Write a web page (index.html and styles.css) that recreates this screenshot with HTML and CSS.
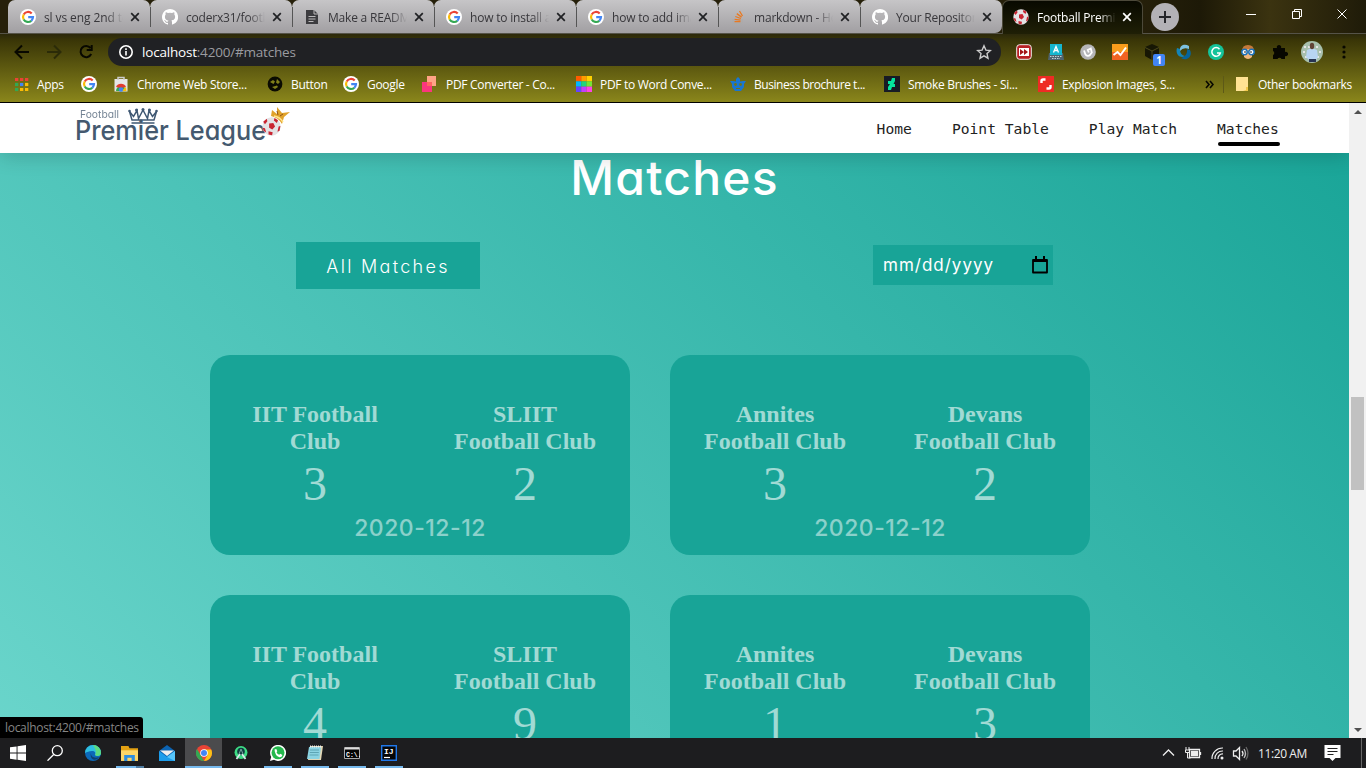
FILE: index.html
```html
<!DOCTYPE html>
<html lang="en">
<head>
<meta charset="utf-8">
<title>Football Premier League</title>
<link rel="stylesheet" href="styles.css">
</head>
<body>
<svg class="defs">
  <symbol id="google" viewBox="0 0 16 16"><circle cx="8" cy="8" r="8" fill="#fff"/><g fill="none" stroke-width="2.2"><path d="M11.7 4.5A5 5 0 0 0 3.7 5.5" stroke="#ea4335"/><path d="M3.7 5.5A5 5 0 0 0 3.7 10.5" stroke="#fbbc05"/><path d="M3.7 10.5A5 5 0 0 0 11.3 11.8" stroke="#34a853"/><path d="M11.3 11.8A5 5 0 0 0 13 8.1H8.2" stroke="#4285f4"/></g></symbol>
  <symbol id="github" viewBox="0 0 16 16"><path fill="#fff" d="M8 0C3.6 0 0 3.6 0 8c0 3.5 2.300 6.500 5.500 7.600.4.1.5-.2.5-.4v-1.400c-2.200.5-2.700-1-2.700-1-.4-.9-.9-1.200-.9-1.200-.7-.5.1-.5.1-.5.8.1 1.200.8 1.200.8.7 1.300 1.900.9 2.300.7.1-.5.3-.9.5-1.100-1.800-.2-3.600-.9-3.600-4 0-.9.3-1.600.8-2.100-.1-.2-.4-1 .1-2.100 0 0 .7-.2 2.200.8a7.600 7.600 0 0 1 4 0c1.500-1 2.200-.8 2.200-.8.4 1.100.2 1.900.1 2.100.5.6.8 1.300.8 2.100 0 3.100-1.900 3.700-3.700 3.900.3.400.6.9.6 1.700v2.100c0 .2.1.5.6.4A8 8 0 0 0 8 0"/></symbol>
  <symbol id="ball" viewBox="0 0 16 16"><circle cx="8" cy="8" r="7.700" fill="#e4e2e4"/><path fill="#c92531" d="M6 5.500l3.500-.5 1.500 3-2.300 2.500L6 9zM1 4l3-2.500.5 2L2.500 6zM10.500.8l3 2L12.500 5 10 3zM14 8l1.500-.5-.7 4-1.800 1zM5.500 12l3.500.8-.5 2.600-3-.7zM.5 9L2.500 9.500 3.500 13 1.500 11.800z"/></symbol>
  <symbol id="x" viewBox="0 0 10 10"><path d="M1.200 1.200l7.600 7.600M8.800 1.200L1.200 8.800" stroke="currentColor" stroke-width="1.700"/></symbol>
</svg>

<div class="browser">
  <div class="tabs">
    <div class="tab"><svg class="fav"><use href="#google"/></svg><span class="label t1">sl vs eng 2nd test</span><svg class="close"><use href="#x"/></svg></div>
    <div class="tab"><svg class="fav"><use href="#github"/></svg><span class="label">coderx31/football</span><svg class="close"><use href="#x"/></svg></div>
    <div class="tab"><svg class="fav" viewBox="0 0 16 16"><path fill="#3c3c3f" d="M2 1h8l4 4v10H2z"/><path d="M10 1v4h4M4.500 7.500h7M4.500 10h7M4.500 12.500h5" stroke="#bbb9bb" fill="none"/></svg><span class="label">Make a README</span><svg class="close"><use href="#x"/></svg></div>
    <div class="tab"><svg class="fav"><use href="#google"/></svg><span class="label">how to install angular</span><svg class="close"><use href="#x"/></svg></div>
    <div class="tab"><svg class="fav"><use href="#google"/></svg><span class="label">how to add image</span><svg class="close"><use href="#x"/></svg></div>
    <div class="tab"><svg class="fav" viewBox="0 0 16 16"><path d="M3 10v4.500h9V10" stroke="#aaa" fill="none"/><path d="M4.500 12.700h6M4.600 10.300l6 .9M5.300 7.500l5.600 2M6.800 4.600l4.800 3.500M9.500 2l3 5" stroke="#e87922" stroke-width="1.300"/></svg><span class="label">markdown - How to</span><svg class="close"><use href="#x"/></svg></div>
    <div class="tab last"><svg class="fav"><use href="#github"/></svg><span class="label">Your Repositories</span><svg class="close"><use href="#x"/></svg></div>
    <div class="tab active"><svg class="fav"><use href="#ball"/></svg><span class="label">Football Premier</span><svg class="close"><use href="#x"/></svg></div>
    <div class="newtab"><svg width="12" height="12"><path d="M6 0v12M0 6h12" stroke="#25252a" stroke-width="2"/></svg></div>
    <svg class="winctl" width="120" height="24" fill="none" stroke="#fff"><path d="M8 12.500h10M54.500 9.500h7v7h-7zM56.500 9v-1.500h7v7H62M99.500 7.500l9 9M108.500 7.500l-9 9"/></svg>
  </div>

  <div class="toolbar">
    <svg class="navbtns" width="108" height="28" fill="none" stroke-width="2"><path d="M29 14H16M22 7.500L15.500 14l6.500 6.500" stroke="#080800"/><path d="M47 14h13M54 7.500l6.500 6.500-6.500 6.500" stroke="#2b2b08"/><path d="M90.500 10A5.600 5.600 0 1 0 91.200 16M91.700 7v5h-5" stroke="#080800"/></svg>
    <div class="omnibox">
      <svg width="16" height="16" fill="none" stroke="#fff" stroke-width="1.600"><circle cx="8" cy="8" r="6.200"/><path d="M8 7v4.500M8 4.300v1.600"/></svg>
      <span class="url"><b>localhost</b>:4200/#matches</span>
      <svg class="star" width="16" height="16" viewBox="0 0 16 16" fill="none" stroke="#ccc" stroke-width="1.400"><path d="M8 1.800l1.900 4.300 4.600.4L11 9.600l1 4.600-4-2.400-4 2.400 1-4.600-3.500-3.100 4.600-.4z"/></svg>
    </div>
    <div class="exts">
      <svg viewBox="0 0 16 16"><rect x=".7" y=".7" width="14.600" height="14.600" rx="3" fill="#b81f24" stroke="#eee"/><rect x="3" y="4" width="10" height="8" fill="#fff"/><path d="M4 5l4 3-4 3zM8 5l4 3-4 3z" fill="#a31418"/></svg>
      <svg viewBox="0 0 16 16"><path d="M1 9h14l1 7H0z" fill="#4f6470"/><path d="M2 0h12v11H2z" fill="#15b6cf"/><path d="M5.500 8.500L8 2.500l2.500 6M6.300 6.500h3.500" stroke="#fff" fill="none" stroke-width="1.300"/><path d="M2 12.500h12M4 14.500h8" stroke="#c4d0d5" stroke-dasharray="1.500 1"/></svg>
      <svg viewBox="0 0 16 16"><circle cx="8" cy="8" r="7.800" fill="#b5b5b8"/><path d="M4 6.500l1.500 4a3 3 0 0 0 4.500.5l1.800-2.500-1-4-3 1.500 1 2.500" fill="none" stroke="#fff" stroke-width="1.800"/></svg>
      <svg viewBox="0 0 16 16"><path fill="#f99d1c" d="M0 0h16v8H0z"/><path fill="#f26322" d="M0 8h16v8H0z"/><path d="M1.500 11l4-3 3 3L14 3.500" fill="none" stroke="#fff" stroke-width="2"/></svg>
      <div class="cube"><svg viewBox="0 0 16 16"><path fill="#171704" d="M8 0l7 3v9l-7 4-7-4V3z"/><path d="M1 3.500l7 3.500 7-3.500M8 7v9" stroke="#5a5520" fill="none" stroke-width=".8"/></svg><span>1</span></div>
      <svg viewBox="0 0 16 16"><path d="M13 2C8-1 3 2 4 7q3-4 9-2z" fill="#7dc1df"/><path d="M1 4c-2 6 3 11 8 8q-5-1-5-7z" fill="#1485b8"/><path d="M5 14c6 4 12-2 9-8L11 5q1 7-6 9" fill="#07649c"/></svg>
      <svg viewBox="0 0 16 16"><circle cx="8" cy="8" r="8" fill="#15c39a"/><path d="M11.500 5.200A4.300 4.300 0 1 0 12.300 9H9" fill="none" stroke="#fff" stroke-width="1.500"/></svg>
      <svg viewBox="0 0 16 16"><path fill="#c4793a" d="M2 7q0-6 6-6t6 6v4H2z"/><path fill="#f1b77d" d="M4 5h8v8q-4 4-8 0z"/><g fill="#fff" stroke="#1771bd" stroke-width="1.500"><circle cx="4.500" cy="8" r="2.700"/><circle cx="11.500" cy="8" r="2.700"/></g><circle cx="5" cy="8" r=".8"/><circle cx="11" cy="8" r=".8"/></svg>
      <svg viewBox="0 0 16 16"><path fill="#070700" d="M1 4h4a2.200 2.200 0 1 1 4 0h4v4a2.200 2.200 0 1 1 0 4v3H9.500a2.200 2.200 0 0 0-4 0H1v-4a2.200 2.200 0 0 0 0-4z"/></svg>
      <svg class="avatar" viewBox="0 0 22 22"><circle cx="11" cy="11" r="11" fill="#a7bfac"/><path d="M3 6h16M2 11h18M4 16h14" stroke="#e4e4e4" stroke-dasharray="2 2" stroke-width="2"/><path fill="#b8d5f4" d="M6 9l5-2 5 2 1 7-2 3H8l-3-3z"/><ellipse cx="11" cy="5" rx="2.200" ry="3.200" fill="#604336"/><path fill="#273352" d="M8 18h7v3H8z"/></svg>
      <svg class="dots" viewBox="0 0 4 16" fill="#080800"><circle cx="2" cy="3" r="1.600"/><circle cx="2" cy="8" r="1.600"/><circle cx="2" cy="13" r="1.600"/></svg>
    </div>
  </div>

  <div class="bookmarks">
    <div class="bm b1"><svg viewBox="0 0 16 16" stroke-width="3.200" stroke-dasharray="3.300 1.700"><path d="M2 3.500h14" stroke="#ea4335"/><path d="M2 8.500h5" stroke="#34a853"/><path d="M7 8.500h5" stroke="#4285f4"/><path d="M12 8.500h4" stroke="#fbbc05"/><path d="M2 13.500h5" stroke="#34a853"/><path d="M7 13.500h9" stroke="#fbbc05"/></svg><span>Apps</span></div>
    <div class="bm b2"><svg><use href="#google"/></svg></div>
    <div class="bm b3"><svg viewBox="0 0 16 16"><path d="M1.500 3h13v12.500h-13z" fill="#e6e6e6"/><path d="M5 4V1.500h6V4" fill="none" stroke="#ccc" stroke-width="1.500"/><path d="M3 15a5 5 0 0 1 10 0z" fill="#34a853"/><path d="M3 11a5.500 5.500 0 0 1 10 0l-5 1z" fill="#e33b2e"/><path d="M8 15l5-4 .5 4z" fill="#fbbc05"/><circle cx="8" cy="13.500" r="2.200" fill="#4285f4"/></svg><span>Chrome Web Store...</span></div>
    <div class="bm b4"><svg viewBox="0 0 16 16"><circle cx="8" cy="8" r="7.400" fill="#0b0b02"/><path d="M3 6l3-2 2 1.500L6.500 8zM10 3l3 3-2 2-2-1.500zM5 11l5-1.500 1 1.500-3 2z" fill="#81801a"/></svg><span>Button</span></div>
    <div class="bm b5"><svg><use href="#google"/></svg><span>Google</span></div>
    <div class="bm b6"><svg viewBox="0 0 16 16"><path d="M5 0h9v10H5z" fill="#ffa386"/><path d="M0 6h10v10H0z" fill="#fb367d"/><path d="M5 6h5v4H5z" fill="#ff655f"/></svg><span>PDF Converter - Co...</span></div>
    <div class="bm b7"><svg viewBox="0 0 16 16" stroke-width="5.400"><path d="M0 2.700h5.300" stroke="#ff5b00"/><path d="M5.300 2.700h5.300" stroke="#ff9c00"/><path d="M10.600 2.700H16" stroke="#ffd000"/><path d="M0 8h5.300" stroke="#00b7ff"/><path d="M5.300 8h5.300" stroke="#20d77b"/><path d="M10.600 8H16" stroke="#73e735"/><path d="M0 13.300h5.300" stroke="#6543ff"/><path d="M5.300 13.300h5.300" stroke="#c33eff"/><path d="M10.600 13.300H16" stroke="#ff42e6"/></svg><span>PDF to Word Conve...</span></div>
    <div class="bm b8"><svg viewBox="0 0 16 16"><path fill="#1976d2" d="M3 5l3 .5V3l2-2 2 2v2.500l3-.5 3 0-2 3v3l-3 4H5l-3-4V8L0 5z"/><g fill="#72751a"><circle cx="5.500" cy="8.500" r="1.400"/><circle cx="10.500" cy="8.500" r="1.400"/></g><path d="M6 12.500h4" stroke="#72751a"/></svg><span>Business brochure t...</span></div>
    <div class="bm b9"><svg viewBox="0 0 16 16"><path fill="#171b25" d="M0 0h16v16H0z"/><path fill="#05e59d" d="M8 2h3v3L9.500 8H11v3H8l-1 3H4v-3l2-3H4V5h3z"/></svg><span>Smoke Brushes - Si...</span></div>
    <div class="bm b10"><svg viewBox="0 0 16 16"><path fill="#ee2b24" d="M0 0h16v16H0z"/><path d="M3.500 7V5q0-1.500 1.500-1.500h2.500M12.500 9v2q0 1.500-1.500 1.500H8.500" fill="none" stroke="#fff" stroke-width="2.400"/></svg><span>Explosion Images, S...</span></div>
    <svg class="more" width="9" height="9" fill="none" stroke="#080800" stroke-width="1.600"><path d="M1 1l3 3.500L1 8M5 1l3 3.500L5 8"/></svg>
    <div class="bm other"><svg viewBox="0 0 16 16"><path fill="#ffe394" d="M2 1h12v11l-2 3H2z"/><path fill="#f1c84b" d="M12 11h2v4H9l3-1z"/></svg><span>Other bookmarks</span></div>
  </div>
</div>

<div class="view">
  <main class="page">
    <nav class="site-nav">
      <svg class="logo" width="220" height="44">
        <text class="logo-small" x="5" y="13" textLength="39" lengthAdjust="spacingAndGlyphs">Football</text>
        <text class="logo-big" x="0" y="35" textLength="191" lengthAdjust="spacingAndGlyphs">Premier League</text>
        <path d="M54.500 6.500L57 15h22l2.500-8.500M54.500 6.500l4 5 3.500-6 1.500 8 4.500-8.500 4.500 8.500 1.500-8 3.500 6 4-5M56.500 18h23" fill="none" stroke="#3f5873" stroke-width="1.500"/>
        <g fill="#3f5873"><circle cx="54.500" cy="6" r="1.300"/><circle cx="61.500" cy="5" r="1.500"/><circle cx="68" cy="4.500" r="1.500"/><circle cx="74.500" cy="5" r="1.500"/><circle cx="81.500" cy="6" r="1.300"/></g>
        <svg x="187" y="11" width="19" height="21"><use href="#ball"/></svg>
        <path d="M196 11l1-6 5 4 0-7 5 6 8-1-6 5-2 7q-3-6-11-8z" fill="#e0a22a"/><path d="M199 11q6 1 9 6" fill="none" stroke="#ffe289" stroke-width="1.500"/><path d="M202 6l1 4M208 9l-3 2" stroke="#8d5316"/>
      </svg>
      <ul class="links"><li>Home</li><li>Point Table</li><li>Play Match</li><li class="current">Matches</li></ul>
    </nav>
    <section class="matches">
      <h1>Matches</h1>
      <div class="filters">
        <button class="all">All Matches</button>
        <div class="date"><span>mm/dd/yyyy</span><svg width="16" height="18"><path d="M1 4h14v12.500H1z" fill="none" stroke="#000" stroke-width="1.800" stroke-linejoin="round"/><path d="M1 3h14v3H1zM3 0h2v3H3zM11 0h2v3h-2z"/></svg></div>
      </div>
      <div class="cards">
        <article class="card"><div class="teams"><div><h2>IIT Football<br>Club</h2><p>3</p></div><div><h2>SLIIT<br>Football Club</h2><p>2</p></div></div><time>2020-12-12</time></article>
        <article class="card"><div class="teams"><div><h2>Annites<br>Football Club</h2><p>3</p></div><div><h2>Devans<br>Football Club</h2><p>2</p></div></div><time>2020-12-12</time></article>
        <article class="card"><div class="teams"><div><h2>IIT Football<br>Club</h2><p>4</p></div><div><h2>SLIIT<br>Football Club</h2><p>9</p></div></div></article>
        <article class="card"><div class="teams"><div><h2>Annites<br>Football Club</h2><p>1</p></div><div><h2>Devans<br>Football Club</h2><p>3</p></div></div></article>
      </div>
    </section>
  </main>
  <div class="scrollbar"><i class="up"></i><div class="thumb"></div><i class="down"></i></div>
  <div class="status">localhost:4200/#matches</div>
</div>

<footer class="taskbar">
  <div class="task start"><svg viewBox="0 0 16 16" fill="#fff"><path d="M0 2.300l6.600-.9v6.200H0zM7.500 1.300L16 0v7.600H7.500zM0 8.500h6.600v6.200L0 13.800zM7.500 8.500H16V16l-8.500-1.200z"/></svg></div>
  <div class="task"><svg viewBox="0 0 16 16" fill="none" stroke="#fff" stroke-width="1.300"><circle cx="10.300" cy="5.700" r="5"/><path d="M6.700 9.500L.5 15.700"/></svg></div>
  <div class="task"><svg viewBox="0 0 16 16"><circle cx="8" cy="8" r="8" fill="#0c68b8"/><path d="M0 8a8 8 0 0 1 16 0c0 3-4 4-6 2 1-2 0-4-3-4S2 7 0 8" fill="#2fbfe0"/><path d="M8 0a8 8 0 0 1 8 8c0 3-4 4-6 2 2-3 0-7-2-10" fill="#5cdb80"/><path d="M6 7c-1 4 3 7 8 5-3 5-10 3-8-5" fill="#103f70"/></svg></div>
  <div class="task run double"><svg class="big" viewBox="0 0 16 16"><path fill="#e4a213" d="M0 1h7l1 2h8v4H0z"/><path fill="#ffd768" d="M0 5h16v10H0z"/><path fill="#2e8ee0" d="M3 15V9.500h10V15h-3v-3H6v3z"/></svg></div>
  <div class="task"><svg viewBox="0 0 16 16"><path d="M0 6l8-6 8 6v10H0z" fill="#0c63b1"/><path d="M1 5.500h14L8 11z" fill="#eee"/><path d="M0 6l8 6 8-6v10H0z" fill="#1d9deb"/><path d="M16 6v10L8 12z" fill="#56c5fa"/></svg></div>
  <div class="task run focus"><svg viewBox="0 0 16 16"><circle cx="8" cy="8" r="8" fill="#ea4335"/><path d="M1 4l4.500 7.500L8 16A8 8 0 0 1 1 4" fill="#34a853"/><path d="M8 4.500h7.200A8 8 0 0 1 8 16l3.500-6z" fill="#fbc116"/><circle cx="8" cy="8" r="3.800" fill="#fff"/><circle cx="8" cy="8" r="3" fill="#4285f4"/></svg></div>
  <div class="task"><svg viewBox="0 0 16 16"><circle cx="8" cy="7.500" r="6.500" fill="#3ddc84"/><circle cx="8" cy="6.500" r="3.800" fill="#113d41"/><path d="M7 9L3.500 14M9 9l3.500 5" stroke="#d8e9e8" stroke-width="1.800"/><path d="M8 4L6 9M8 4l2 5" stroke="#77a59f"/></svg></div>
  <div class="task run"><svg viewBox="0 0 16 16"><path d="M0 16l1.200-4A8 8 0 1 1 4 14.800z" fill="#fff"/><circle cx="8" cy="7.800" r="6.500" fill="#24b84d"/><path d="M4.500 4.500l1.800-.5 1 2.300-.8 1q1 2 2.700 2.500l1.200-1 2 1.200q-.5 2.500-3 2.200Q5 11 4.500 4.500" fill="#fff"/></svg></div>
  <div class="task run"><svg viewBox="0 0 16 16"><path d="M3 1h13l-2 14H1z" fill="#e3d7b5"/><path d="M2 2h12l-1.500 12H0z" fill="#8bd3e2"/><path d="M3 5h9M2.800 7.500h9M2.500 10h9" stroke="#5da5b4"/><path d="M3 1.500h12" stroke="#eee" stroke-width="2" stroke-dasharray="1 1"/></svg></div>
  <div class="task run"><svg viewBox="0 0 16 16"><path d="M.5 2.500h15v11H.5z" fill="#050505" stroke="#aaa"/><path d="M1 3.500h14" stroke="#ddd" stroke-width="2"/><text class="cmd" x="2" y="11.500">C:\.</text></svg></div>
  <div class="task run"><svg viewBox="0 0 16 16"><path d="M.7.700h14.600v14.600H.7z" fill="#050505" stroke="#2077e8" stroke-width="1.400"/><text class="ij" x="3" y="8.500">IJ</text><path d="M3 12.500h6" stroke="#fff" stroke-width="1.200"/></svg></div>
  <div class="tray">
    <svg width="92" height="20" fill="none" stroke="#eee" stroke-width="1.300"><path d="M1 12.500l5.500-5.500 5.500 5.500"/><path d="M27.500 6.500h10v8h-10zM38.500 9v3"/><path d="M29.500 8.500h6v4h-6z" fill="#eee"/><path d="M24 4v3M27 4v3M23.500 7h4v2.500h-4zM25.500 10v5h3" stroke-width="1"/><path d="M50 16A10.500 10.500 0 0 1 61 5M53 16a7.500 7.500 0 0 1 8-8M56 16a4.500 4.500 0 0 1 5-5" stroke-width="1.200"/><circle cx="60" cy="15" r="1.500" fill="#eee" stroke="none"/><path d="M71.500 8h2.500l3.500-3.500v12L74 13h-2.500zM80 8q2 2.500 0 5"/><path d="M82 6q3 4.500 0 9" stroke="#bbb"/><path d="M84 4q4 6.500 0 12.500" stroke="#666"/></svg>
    <span class="clock">11:20 AM</span>
    <svg class="note" width="17" height="16"><path fill="#fff" d="M.5 0h16v13h-5l-3 3-3-3h-5z"/><path d="M3.500 3.500h10M3.500 6.500h10M3.500 9.500h6" stroke="#222"/></svg>
    <i class="peek"></i>
  </div>
</footer>
</body>
</html>
```
FILE: styles.css
```css
* { box-sizing: border-box; }
body { margin: 0; width: 1366px; height: 768px; overflow: hidden; display: flex; flex-direction: column; font-family: "Open Sans", "Noto Sans", sans-serif; font-size: 12px; }
.defs { display: none; }
svg { flex: none; }

/* browser chrome */
.browser { flex: none; height: 103px; border-bottom: 1px solid #000; background: linear-gradient(#1c1905 0, #2b280b 34px, #393507 40px, #8a861b 102px); color: #fff; }
.tabs { height: 34px; display: flex; align-items: flex-start; padding-left: 8px; border-bottom: 1px solid #555348; background: linear-gradient(90deg, #26200a 0 1140px, #1d1907 1200px, #3b3310 1270px, #1f1b09); }
.tab { flex: none; width: 142px; height: 33px; display: flex; align-items: center; padding: 1px 0 0 12px; color: #38373b; background: linear-gradient(#c6c5c7, #a19fa2); border-radius: 7px 7px 0 0; position: relative; }
.tab:not(.last):not(.active)::after { content: ""; position: absolute; right: -1px; top: 7px; width: 1px; height: 20px; background: #555; z-index: 1; }
.tab.last { border-radius: 7px 7px 7px 0; }
.tab.active { width: 141px; height: 34px; padding-bottom: 1px; color: #fff; background: linear-gradient(#080900, #1f1f06); border: 1px solid #4c493a; border-bottom: 0; padding: 0 0 1px 10px; }
.fav { width: 16px; height: 16px; }
.label { width: 79px; margin-left: 8px; overflow: hidden; white-space: nowrap; letter-spacing: -.2px; -webkit-mask-image: linear-gradient(90deg, #000 62px, transparent 79px); mask-image: linear-gradient(90deg, #000 62px, transparent 79px); }
.label.t1 { letter-spacing: -.1px; }
.close { width: 10px; height: 10px; margin-left: 7px; color: #202124; }
.active .close { color: #fff; margin-left: 6px; }
.newtab { width: 28px; height: 28px; margin: 3px 0 0 8px; border-radius: 50%; background: #b3b1b6; display: grid; place-items: center; }
.winctl { margin: 2px 8px 0 auto; }

.toolbar { height: 32px; display: flex; align-items: center; padding-top: 4px; }
.omnibox { width: 893px; height: 28px; flex: none; border-radius: 14px; background: #202124; display: flex; align-items: center; padding: 0 9px 0 10px; }
.url { margin-left: 8px; font-size: 13.5px; color: #9b9ca0; letter-spacing: -.2px; }
.url b { font-weight: 400; color: #fff; }
.star { margin-left: auto; }
.exts { display: flex; align-items: center; margin-left: 15px; gap: 16px; }
.exts svg { width: 16px; height: 16px; display: block; }
.cube { position: relative; }
.cube span { position: absolute; left: 9px; top: 10px; width: 12px; height: 12px; border-radius: 2px; background: #4285f4; font: bold 10px/12px "Open Sans", sans-serif; text-align: center; }
.exts .avatar { width: 22px; height: 22px; margin-left: -3px; }
.exts .dots { width: 4px; margin-left: 3px; }

.bookmarks { height: 36px; display: flex; align-items: center; padding-left: 13px; }
.bm { display: flex; align-items: center; gap: 8px; flex: none; white-space: nowrap; letter-spacing: -.3px; }
.bm svg { width: 16px; height: 16px; }
.b1 { width: 68px; } .b2 { width: 32px; } .b3 { width: 154px; } .b4 { width: 76px; } .b5 { width: 79px; }
.b6 { width: 154px; } .b7 { width: 154px; } .b8 { width: 154px; letter-spacing: -.45px; } .b9 { width: 154px; } .b10 { width: 167px; }
.other { margin-left: 9px; padding-left: 10px; border-left: 1px solid #5d5917; }

/* viewport */
.view { flex: none; height: 635px; display: flex; position: relative; overflow: hidden; }
.page { width: 1349px; display: flex; flex-direction: column; overflow: hidden; background: linear-gradient(45deg, #6ad5cb, #18a497); }
.site-nav { flex: none; height: 50px; background: #fff; display: flex; align-items: flex-start; padding-left: 75px; z-index: 1; box-shadow: 0 4px 20px rgba(0,0,0,.16); }
.logo { margin-top: 2px; }
.logo text { font-family: Inter, sans-serif; fill: #44596f; font-feature-settings: "cv11"; }
.logo-big { font-size: 27px; font-weight: 500; }
.logo-small { font-size: 10.5px; opacity: .75; }
.links { list-style: none; margin: 16px 69px 0 auto; padding: 0; display: flex; gap: 40px; font: 14.65px/19px "DejaVu Sans Mono", monospace; color: #222; }
.current::after { content: ""; display: block; width: 62px; height: 4px; margin: 4px 0 0 1px; border-radius: 2px; background: #000; }

.matches { flex: none; font-family: Inter, sans-serif; font-feature-settings: "cv11"; color: #fff; }
.matches h1 { margin: 0; height: 89px; text-align: center; font-size: 48px; line-height: 50px; font-weight: 500; letter-spacing: 1.2px; }
.filters { display: flex; align-items: center; justify-content: space-between; padding: 0 296px; height: 47px; }
.all { width: 184px; height: 47px; border: 0; padding: 2px 0 0; background: #18a497; color: #fff; font: 300 18px Inter, sans-serif; font-feature-settings: "cv11"; letter-spacing: 2.3px; white-space: nowrap; }
.date { width: 180px; height: 40px; margin-bottom: 1px; background: #18a497; display: flex; align-items: center; justify-content: space-between; padding: 0 5px 0 10px; font-size: 17px; letter-spacing: 1px; }
.cards { display: grid; grid-template-columns: 420px 420px; grid-auto-rows: 200px; gap: 40px; padding: 66px 0 0 210px; }
.card { border-radius: 20px; background: #18a497; padding-top: 46px; text-align: center; }
.teams { display: grid; grid-template-columns: 1fr 1fr; font-family: "Liberation Serif", serif; color: rgba(255,255,255,.6); }
.teams h2 { margin: 0; font-size: 24px; line-height: 27px; font-weight: 700; }
.teams p { margin: 1px 0 -1px; font-size: 48px; line-height: 55px; }
.card time { display: block; font-size: 23px; line-height: 34px; font-weight: 500; letter-spacing: .5px; color: rgba(255,255,255,.5); padding-top: 1px; }

.scrollbar { width: 17px; background: #f1f1f1; display: flex; flex-direction: column; align-items: center; padding: 7px 0 6px; }
.scrollbar i { border: 4px solid transparent; }
.scrollbar .up { border-top: 0; border-bottom-color: #505050; }
.scrollbar .down { border-bottom: 0; border-top-color: #505050; margin-top: auto; }
.thumb { width: 13px; height: 93px; margin-top: 283px; background: #c1c1c1; }
.status { position: absolute; left: 0; bottom: 0; width: 143px; height: 21px; padding-left: 5px; border-radius: 0 3px 0 0; background: #000; color: #858585; line-height: 22px; letter-spacing: -.3px; white-space: nowrap; }

/* taskbar */
.taskbar { flex: none; height: 30px; display: flex; background: #1d1d1f; color: #eee; }
.task { flex: none; width: 37px; height: 30px; display: flex; justify-content: center; align-items: center; position: relative; }
.start { width: 36px; }
.task:nth-child(n+3) { left: 1px; }
.task svg { width: 16px; height: 16px; }
.task svg.big { width: 17px; height: 17px; }
.run::after { content: ""; position: absolute; left: 5px; bottom: 0; width: 28px; height: 2px; background: #76b9ed; }
.run.double::after { background: linear-gradient(90deg, #76b9ed 20px, #4f7ba0 20px); }
.run.focus { background: #4b4b4d; }
.run.focus::after { left: 0; width: 37px; }
.cmd { font: bold 6.500px "Liberation Mono", monospace; fill: #fff; }
.ij { font: bold 8px "Liberation Mono", monospace; fill: #fff; }
.tray { display: flex; align-items: center; margin-left: auto; height: 30px; }
.clock { width: 50px; margin-left: 4px; white-space: nowrap; letter-spacing: -.4px; }
.note { margin: 0 20px 0 16px; }
.peek { width: 1px; height: 30px; background: #666; margin-right: 4px; }
```
